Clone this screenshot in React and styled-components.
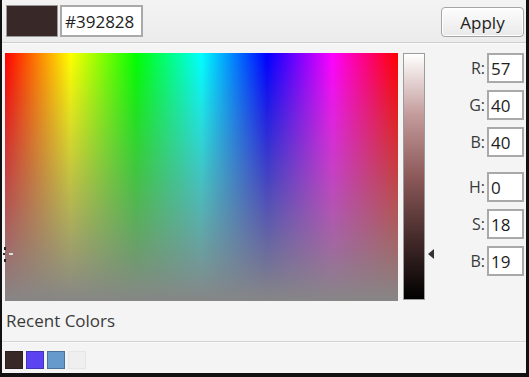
import React from "react";
import styled, { createGlobalStyle } from "styled-components";

const GlobalStyle = createGlobalStyle`
	html, body {
		margin: 0;
		padding: 0;
		height: 100%;
		overflow: hidden;
	}
	body {
		font-family: "Open Sans", "Noto Sans", "DejaVu Sans", sans-serif;
		background-color: #ffffff;
	}
	#root {
		height: 100%;
	}
`;

const rgbFields = [
	{ label: "R:", value: "57" },
	{ label: "G:", value: "40" },
	{ label: "B:", value: "40" },
];

const hsbFields = [
	{ label: "H:", value: "0" },
	{ label: "S:", value: "18" },
	{ label: "B:", value: "19" },
];

const recentColors = ["#392828", "#5b43f2", "#6699cc", "#efefef"];

function App() {
	return (
		<>
			<GlobalStyle />
			<Window>
				<Header>
					<CurrentSwatch />
					<HexInput defaultValue="#392828" />
					<ApplyButton>Apply</ApplyButton>
				</Header>

				<Main>
					<Spectrum>
						<Marker width="14" height="16" viewBox="0 0 14 16">
							<rect x="1" y="0" width="2" height="3" fill="#222" />
							<rect x="1" y="12" width="2" height="3" fill="#222" />
							<rect x="6" y="6" width="4" height="2" fill="#ddd" />
							<rect x="0" y="6" width="2" height="2" fill="#333" />
						</Marker>
					</Spectrum>

					<SliderColumn>
						<BrightnessBar />
						<Pointer width="7" height="10" viewBox="0 0 7 10">
							<path d="M6 0 L0 5 L6 10 Z" fill="#333" />
						</Pointer>
					</SliderColumn>

					<Fields>
						<FieldGroup>
							{rgbFields.map((f) => (
								<FieldRow key={f.label}>
									<FieldLabel>{f.label}</FieldLabel>
									<FieldInput defaultValue={f.value} />
								</FieldRow>
							))}
						</FieldGroup>
						<FieldGroup>
							{hsbFields.map((f) => (
								<FieldRow key={f.label + f.value}>
									<FieldLabel>{f.label}</FieldLabel>
									<FieldInput defaultValue={f.value} />
								</FieldRow>
							))}
						</FieldGroup>
					</Fields>
				</Main>

				<RecentLabel>Recent Colors</RecentLabel>
				<Divider />
				<RecentRow>
					{recentColors.map((c) => (
						<RecentSwatch key={c} color={c} />
					))}
				</RecentRow>
			</Window>
		</>
	);
}

export default App;

const Window = styled.div`
	box-sizing: border-box;
	height: 100%;
	background-color: #f4f4f4;
	border-left: 2px solid #111;
	border-right: 3px solid #111;
	border-bottom: 4px solid #111;
	display: flex;
	flex-direction: column;
`;

const Header = styled.div`
	box-sizing: border-box;
	height: 43px;
	display: flex;
	align-items: flex-start;
	padding: 5px 2px 0 4px;
	background: linear-gradient(#f3f3f3, #ececec);
	border-bottom: 1px solid #cfcfcf;
	box-shadow: 0 1px 0 #fbfbfb;
`;

const CurrentSwatch = styled.div`
	box-sizing: border-box;
	width: 52px;
	height: 32px;
	background-color: #392828;
	border: 1px solid #9a9a9a;
`;

const HexInput = styled.input`
	box-sizing: border-box;
	width: 83px;
	height: 32px;
	margin-left: 2px;
	padding: 0 3px;
	border: 2px solid #a9a9a9;
	background: #fff;
	font-family: "Open Sans", "Noto Sans", sans-serif;
	font-size: 17px;
	color: #222;
	outline: none;
`;

const ApplyButton = styled.button`
	box-sizing: border-box;
	margin-left: auto;
	margin-top: 2px;
	width: 83px;
	height: 30px;
	border: 1px solid #a5a5a5;
	border-radius: 4px;
	background: linear-gradient(#fdfdfd, #e9e9e9);
	box-shadow: inset 0 0 0 1px #ffffff;
	font-family: "Open Sans", "Noto Sans", sans-serif;
	font-size: 17px;
	color: #222;
	padding: 0;
`;

const Main = styled.div`
	display: flex;
	align-items: flex-start;
	padding: 10px 2px 0 3px;
`;

const Spectrum = styled.div`
	position: relative;
	width: 393px;
	height: 248px;
	background:
		linear-gradient(to bottom, rgba(134, 134, 134, 0), rgb(134, 134, 134)),
		linear-gradient(
			to right,
			#ff0000 0%,
			#ffff00 16.66%,
			#00ff00 33.33%,
			#00ffff 50%,
			#0000ff 66.66%,
			#ff00ff 83.33%,
			#ff0000 100%
		);
`;

const Marker = styled.svg`
	position: absolute;
	left: -2px;
	top: 194px;
`;

const SliderColumn = styled.div`
	position: relative;
	margin-left: 5px;
	width: 32px;
	height: 248px;
`;

const BrightnessBar = styled.div`
	box-sizing: border-box;
	width: 22px;
	height: 247px;
	border: 1px solid #9c9c9c;
	background: linear-gradient(#ffffff 0%, #c39a9a 25%, #8d5959 50%, #3d2626 78%, #000000 100%);
`;

const Pointer = styled.svg`
	position: absolute;
	left: 25px;
	top: 196px;
`;

const Fields = styled.div`
	margin-left: auto;
	display: flex;
	flex-direction: column;
	gap: 15px;
`;

const FieldGroup = styled.div`
	display: flex;
	flex-direction: column;
	gap: 7px;
`;

const FieldRow = styled.div`
	display: flex;
	align-items: center;
	justify-content: flex-end;
	gap: 2px;
`;

const FieldLabel = styled.span`
	font-size: 16px;
	color: #3a3a3a;
`;

const FieldInput = styled.input`
	box-sizing: border-box;
	width: 37px;
	height: 30px;
	padding: 0 2px;
	border: 2px solid #a9a9a9;
	background: #fff;
	font-family: "Open Sans", "Noto Sans", sans-serif;
	font-size: 17px;
	color: #222;
	outline: none;
`;

const RecentLabel = styled.div`
	margin-top: 10px;
	padding-left: 4px;
	font-size: 17px;
	line-height: 20px;
	color: #3a3a3a;
`;

const Divider = styled.div`
	margin-top: 10px;
	height: 1px;
	background-color: #d4d4d4;
	box-shadow: 0 1px 0 #fafafa;
`;

const RecentRow = styled.div`
	display: flex;
	gap: 3px;
	padding: 9px 0 0 3px;
`;

const RecentSwatch = styled.div`
	box-sizing: border-box;
	width: 18px;
	height: 18px;
	background-color: ${(p) => p.color};
	border: 1px solid ${(p) => (p.color === "#efefef" ? "#e6e6e6" : "rgba(0,0,0,0.25)")};
`;
